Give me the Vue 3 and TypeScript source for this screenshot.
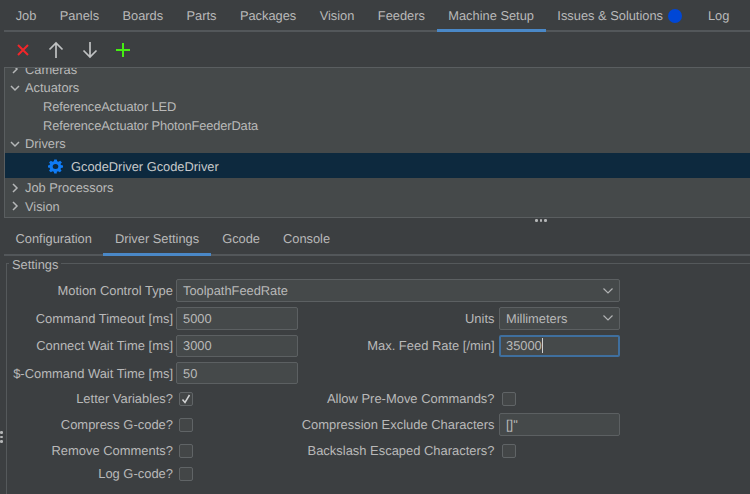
<script setup lang="ts">
const mainTabs = ['Job', 'Panels', 'Boards', 'Parts', 'Packages', 'Vision', 'Feeders', 'Machine Setup']
const subTabs = ['Configuration', 'Driver Settings', 'Gcode', 'Console']

type TreeRow = { label: string; level: number; arrow?: 'open' | 'closed'; selected?: boolean }
const treeRows: TreeRow[] = [
  { label: 'Actuators', level: 0, arrow: 'open' },
  { label: 'ReferenceActuator LED', level: 1 },
  { label: 'ReferenceActuator PhotonFeederData', level: 1 },
  { label: 'Drivers', level: 0, arrow: 'open' },
  { label: 'GcodeDriver GcodeDriver', level: 2, selected: true },
  { label: 'Job Processors', level: 0, arrow: 'closed' },
  { label: 'Vision', level: 0, arrow: 'closed' },
]
</script>

<template>
  <div class="app">
    <nav class="tabs main-tabs">
      <span v-for="t in mainTabs" :key="t" class="tab" :class="{ active: t === 'Machine Setup' }">{{ t }}</span>
      <span class="tab issues">Issues &amp; Solutions<i class="dot"></i></span>
      <span class="tab">Log</span>
    </nav>

    <div class="toolbar">
      <svg width="14" height="14" viewBox="0 0 14 14"><path d="M2 2l10 10M12 2L2 12" stroke="#f2262a" stroke-width="2" fill="none" /></svg>
      <svg class="up" width="18" height="18" viewBox="0 0 18 18"><path d="M9 17V2M2.500 8.500L9 2l6.500 6.500" stroke="#c0c2c3" stroke-width="1.700" fill="none" /></svg>
      <svg width="18" height="18" viewBox="0 0 18 18"><path d="M9 1v15M2.500 9.500L9 16l6.500-6.500" stroke="#c0c2c3" stroke-width="1.700" fill="none" /></svg>
      <svg width="16" height="16" viewBox="0 0 16 16"><path d="M8 1v14M1 8h14" stroke="#45ee12" stroke-width="2" fill="none" /></svg>
    </div>

    <div class="tree">
      <div class="tree-scroll">
        <div class="row">
          <svg class="arrow" width="10" height="10" viewBox="0 0 10 10"><path d="M3 1l4 4-4 4" stroke="#b5b7b8" stroke-width="1.500" fill="none" /></svg>
          <span>Cameras</span>
        </div>
        <div
          v-for="r in treeRows"
          :key="r.label"
          class="row"
          :class="['level-' + r.level, { selected: r.selected }]"
        >
          <svg v-if="r.arrow === 'open'" class="arrow" width="10" height="10" viewBox="0 0 10 10"><path d="M1 3l4 4 4-4" stroke="#b5b7b8" stroke-width="1.500" fill="none" /></svg>
          <svg v-if="r.arrow === 'closed'" class="arrow" width="10" height="10" viewBox="0 0 10 10"><path d="M3 1l4 4-4 4" stroke="#b5b7b8" stroke-width="1.500" fill="none" /></svg>
          <svg v-if="r.selected" class="gear" width="15" height="15" viewBox="0 0 24 24">
            <path fill="#0f7bf5" fill-rule="evenodd" d="M10 1h4l.7 3.100 2 .9 2.800-1.700 2.800 2.800L20 8.900l.9 2.100L24 11.700v3.600l-3.100.7-.9 2.100 1.700 2.800-2.800 2.800-2.800-1.700-2 .9L14 26h-4l-.7-3.100-2-.9-2.800 1.700-2.800-2.800L3.400 18l-.9-2.100L0 15.300v-3.600l2.500-.7.900-2.100-1.700-2.800 2.800-2.800 2.800 1.700 2-.9zM12 9a4.500 4.500 0 1 0 0 9 4.500 4.500 0 0 0 0-9z" transform="scale(1 .89)" />
          </svg>
          <span>{{ r.label }}</span>
        </div>
      </div>
    </div>

    <div class="grip-h"><i></i><i></i><i></i></div>

    <nav class="tabs sub-tabs">
      <span v-for="t in subTabs" :key="t" class="tab" :class="{ active: t === 'Driver Settings' }">{{ t }}</span>
    </nav>

    <section class="settings">
      <div class="grip-v"><i></i><i></i><i></i></div>
      <div class="legend">Settings</div>
      <div class="form">
        <label class="lbl">Motion Control Type</label>
        <div class="ctl select span3">ToolpathFeedRate<svg width="12" height="8" viewBox="0 0 12 8"><path d="M1.500 1.500L6 6l4.500-4.500" stroke="#b0b2b3" stroke-width="1.200" fill="none" /></svg></div>

        <label class="lbl">Command Timeout [ms]</label>
        <div class="ctl">5000</div>
        <label class="lbl r">Units</label>
        <div class="ctl select">Millimeters<svg width="12" height="8" viewBox="0 0 12 8"><path d="M1.500 1.500L6 6l4.500-4.500" stroke="#b0b2b3" stroke-width="1.200" fill="none" /></svg></div>

        <label class="lbl">Connect Wait Time [ms]</label>
        <div class="ctl">3000</div>
        <label class="lbl r">Max. Feed Rate [/min]</label>
        <div class="ctl focus">35000<i class="caret"></i></div>

        <label class="lbl">$-Command Wait Time [ms]</label>
        <div class="ctl">50</div>
        <span></span><span></span>

        <label class="lbl">Letter Variables?</label>
        <div class="check"><svg width="10" height="10" viewBox="0 0 10 10"><path d="M1.500 5.500L4 8.500 8.500 1" stroke="#d2d3d4" stroke-width="1.500" fill="none" /></svg></div>
        <label class="lbl r">Allow Pre-Move Commands?</label>
        <div class="check"></div>

        <label class="lbl">Compress G-code?</label>
        <div class="check"></div>
        <label class="lbl r">Compression Exclude Characters</label>
        <div class="ctl">[]"</div>

        <label class="lbl">Remove Comments?</label>
        <div class="check"></div>
        <label class="lbl r">Backslash Escaped Characters?</label>
        <div class="check"></div>

        <label class="lbl">Log G-code?</label>
        <div class="check"></div>
      </div>
    </section>
  </div>
</template>

<style>
html, body {
  margin: 0;
  background: #3c3f41;
}
</style>

<style scoped>
.app {
  width: 750px;
  height: 494px;
  overflow: hidden;
  position: relative;
  background: #3c3f41;
  color: #b9b9b9;
  font: 12.850px "Liberation Sans", Arial, sans-serif;
  text-rendering: geometricPrecision;
}

.tabs {
  display: flex;
  margin-left: 4px;
  border-bottom: 2px solid #53575a;
}
.tab {
  padding: 0 11.700px;
  position: relative;
  white-space: nowrap;
}
.tab.active::after {
  content: "";
  position: absolute;
  left: 0;
  right: 0;
  bottom: -2px;
  height: 3px;
  background: #4a88c7;
}
.main-tabs {
  height: 30px;
  line-height: 31px;
}
.issues {
  display: flex;
  align-items: center;
  gap: 5px;
  line-height: 33px;
  margin-right: 2.500px;
}
.dot {
  width: 14px;
  height: 14px;
  border-radius: 50%;
  background: #0047d6;
  margin-top: 1px;
}

.toolbar {
  height: 35px;
  display: flex;
  align-items: center;
  padding-left: 15.500px;
  gap: 16px;
}
.up {
  margin-left: 1.500px;
}

.tree {
  margin-left: 4px;
  height: 149px;
  background: #45494a;
  border-top: 1px solid #5a5e60;
  border-bottom: 1px solid #5a5e60;
  border-left: 1px solid #5a5e60;
  overflow: hidden;
}
.tree-scroll {
  margin-top: -8.700px;
}
.row {
  height: 18.700px;
  box-sizing: border-box;
  padding-top: 1px;
  display: flex;
  align-items: center;
  white-space: nowrap;
  padding-left: 5px;
}
.arrow {
  margin-right: 5px;
}
.level-1 {
  padding-left: 38px;
  letter-spacing: -0.120px;
}
.level-2 {
  padding-left: 43px;
}
.selected {
  height: 25px;
  padding-top: 2px;
  background: #0d293e;
  color: #c8cacb;
}
.gear {
  margin-right: 8px;
}

.grip-h {
  height: 5px;
  display: flex;
  justify-content: center;
  align-items: center;
  gap: 2px;
  padding-left: 332px;
}
.grip-h i,
.grip-v i {
  width: 2.500px;
  height: 2.500px;
  border-radius: 50%;
  background: #b4b6b7;
}

.sub-tabs {
  height: 31px;
  line-height: 32px;
}
.sub-tabs .tab {
  padding: 0 11.500px;
}

.settings {
  position: relative;
  height: 238px;
  margin-left: 6px;
  margin-top: 7px;
  border-top: 1px solid #55595b;
  border-left: 1px solid #55595b;
}
.legend {
  position: absolute;
  top: -6px;
  left: 2px;
  padding: 0 3px;
  background: #3c3f41;
  line-height: 14px;
}
.grip-v {
  position: absolute;
  left: -7px;
  top: 167px;
  display: flex;
  flex-direction: column;
  gap: 2px;
}

.form {
  display: grid;
  grid-template-columns: 166px 122px 195px 121px;
  grid-template-rows: 23px 22.500px 22.500px 22px 19px 23px 19px 17px;
  column-gap: 3px;
  row-gap: 5px;
  padding-top: 15px;
  align-items: center;
}
.lbl {
  text-align: right;
  white-space: nowrap;
  font-size: 12.950px;
}
.lbl.r {
  margin-right: 1.500px;
}
.ctl {
  height: 100%;
  box-sizing: border-box;
  border: 1px solid #5c6062;
  border-radius: 2px;
  background: #45494a;
  padding: 0 6px;
  display: flex;
  align-items: center;
}
.select {
  justify-content: space-between;
  padding-right: 5px;
}
.span3 {
  grid-column: span 3;
}
.focus {
  border: 2px solid #3f6f9e;
  padding: 0 5px;
}
.caret {
  width: 1px;
  height: 15px;
  background: #d0d0d0;
}
.check {
  width: 14px;
  height: 14px;
  box-sizing: border-box;
  border: 1px solid #606466;
  border-radius: 2px;
  background: #434647;
  margin-left: 3px;
  display: flex;
  align-items: center;
  justify-content: center;
}
</style>
